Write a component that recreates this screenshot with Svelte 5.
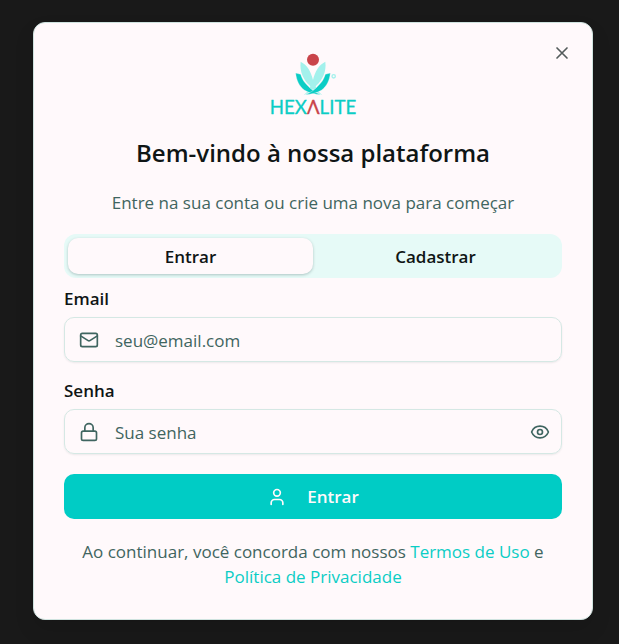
<script>
    let tab = $state("entrar");
    let email = $state("");
    let password = $state("");
    let showPassword = $state(false);

    const tabs = [
        { id: "entrar", label: "Entrar" },
        { id: "cadastrar", label: "Cadastrar" },
    ];

    function handleSubmit(e) {
        e.preventDefault();
    }
</script>

<main class="overlay">
    <div class="dialog" role="dialog" aria-modal="true" aria-labelledby="title">
        <button class="close" type="button" aria-label="Fechar">
            <svg width="20" height="20" viewBox="0 0 24 24">
                <path d="M18 6 6 18M6 6l12 12" />
            </svg>
        </button>

        <svg class="logo" width="94" height="68" viewBox="18 22 282 204" role="img" aria-label="Hexalite">
            <g class="petals">
                <path d="M122 48C142 58 153 78 159 103C164 120 172 136 187 149C170 142 158 132 148 119C131 102 118 78 122 48Z" />
                <path d="M196 48C176 58 165 78 159 103C154 120 146 136 131 149C148 142 160 132 170 119C187 102 200 78 196 48Z" />
            </g>
            <g class="wings">
                <path d="M107 82L122 86C127 103 135 112 145 122C154 132 164 140 182 147C164 146 148 142 134 134C117 121 109 104 107 82Z" />
                <path d="M211 82L196 86C191 103 183 112 173 122C164 132 154 140 136 147C154 146 170 142 184 134C201 121 209 104 211 82Z" />
            </g>
            <circle cx="159" cy="42" r="18" fill="#c9444a" />
            <circle class="mark" cx="221" cy="92" r="5" />
            <text class="wordmark" x="159" y="204" text-anchor="middle">HEX<tspan class="lambda">Λ</tspan>LITE</text>
        </svg>

        <h1 id="title">Bem-vindo à nossa plataforma</h1>
        <p class="subtitle">Entre na sua conta ou crie uma nova para começar</p>

        <div class="tabs" role="tablist">
            {#each tabs as t}
                <button
                    type="button"
                    role="tab"
                    aria-selected={tab === t.id}
                    class:active={tab === t.id}
                    onclick={() => (tab = t.id)}
                >
                    {t.label}
                </button>
            {/each}
        </div>

        <form onsubmit={handleSubmit}>
            <label for="email">Email</label>
            <div class="field">
                <svg width="20" height="20" viewBox="0 0 24 24">
                    <rect x="2" y="4" width="20" height="16" rx="2" />
                    <path d="m22 7-8.970 5.700a1.940 1.940 0 0 1-2.060 0L2 7" />
                </svg>
                <input id="email" type="email" placeholder="seu@email.com" bind:value={email} />
            </div>

            <label for="password">Senha</label>
            <div class="field">
                <svg width="20" height="20" viewBox="0 0 24 24">
                    <rect x="3" y="11" width="18" height="11" rx="2" />
                    <path d="M7 11V7a5 5 0 0 1 10 0v4" />
                </svg>
                <input
                    id="password"
                    type={showPassword ? "text" : "password"}
                    placeholder="Sua senha"
                    bind:value={password}
                />
                <button
                    class="toggle"
                    type="button"
                    aria-label="Mostrar senha"
                    onclick={() => (showPassword = !showPassword)}
                >
                    <svg width="20" height="20" viewBox="0 0 24 24">
                        <path d="M2.062 12.348a1 1 0 0 1 0-.696 10.750 10.750 0 0 1 19.876 0 1 1 0 0 1 0 .696 10.750 10.750 0 0 1-19.876 0" />
                        <circle cx="12" cy="12" r="3" />
                    </svg>
                </button>
            </div>

            <button class="submit" type="submit">
                <svg width="20" height="20" viewBox="0 0 24 24">
                    <path d="M19 21v-2a4 4 0 0 0-4-4H9a4 4 0 0 0-4 4v2" />
                    <circle cx="12" cy="7" r="4" />
                </svg>
                Entrar
            </button>
        </form>

        <p class="terms">
            Ao continuar, você concorda com nossos <a href="#termos">Termos de Uso</a> e
            <a href="#privacidade">Política de Privacidade</a>
        </p>
    </div>
</main>

<style>
    :global(body) {
        background: #191919;
    }

    .overlay {
        box-sizing: border-box;
        min-height: 100vh;
        padding: 22px 26px 24px 33px;
        font-family: "Segoe UI", "Open Sans", "Noto Sans", sans-serif;
        font-size: 17px;
        line-height: 25px;
        color: #0f1515;
    }

    .dialog {
        position: relative;
        box-sizing: border-box;
        max-width: 640px;
        margin: 0 auto;
        padding: 30px;
        background: #fff9fb;
        border: 1px solid #cfe3df;
        border-radius: 12px;
        box-shadow: 0 10px 20px rgba(0, 0, 0, 0.1);
    }

    svg {
        flex: none;
        fill: none;
        stroke: currentColor;
        stroke-width: 2;
        stroke-linecap: round;
        stroke-linejoin: round;
    }

    button {
        padding: 0;
        border: 0;
        background: none;
        font: inherit;
        color: inherit;
        cursor: pointer;
    }

    .close {
        position: absolute;
        top: 20px;
        right: 20px;
        display: flex;
        color: #545b5b;
    }

    .logo {
        display: block;
        margin: 0 auto;
        stroke: none;
    }

    .wings {
        fill: #0bcdc5;
        stroke: #fff9fb;
        stroke-width: 1;
    }

    .petals {
        fill: #a3f1ec;
    }

    .mark {
        stroke: #a3f1ec;
        stroke-width: 4;
    }

    .wordmark {
        font-family: Lato, "Open Sans", sans-serif;
        font-size: 56px;
        fill: #0bcdc5;
        stroke: #0bcdc5;
        stroke-width: 1;
    }

    .lambda {
        fill: #c9444a;
        stroke: #c9444a;
    }

    h1 {
        margin: 14px 0 0;
        font-size: 24px;
        font-weight: 600;
        line-height: 36px;
        text-align: center;
    }

    .subtitle {
        margin: 19px 0;
        color: #3f6560;
        text-align: center;
    }

    .tabs {
        display: grid;
        grid-template-columns: 1fr 1fr;
        padding: 4px;
        background: #e6faf7;
        border-radius: 12px;
    }

    .tabs button {
        height: 36px;
        border-radius: 10px;
        font-weight: 600;
    }

    .tabs .active {
        background: #fff9fb;
        box-shadow: 0 1px 3px rgba(0, 40, 40, 0.25);
    }

    label {
        display: block;
        margin: 8px 0 6px;
        font-weight: 600;
    }

    .field {
        display: flex;
        align-items: center;
        gap: 16px;
        box-sizing: border-box;
        height: 45px;
        margin-bottom: 16px;
        padding: 0 11px 0 14px;
        border: 1px solid #d5e8e4;
        border-radius: 10px;
        box-shadow: 0 1px 2px rgba(0, 40, 40, 0.08);
        color: #3f6560;
    }

    input {
        flex: 1;
        min-width: 0;
        padding: 2px 0 0;
        border: 0;
        outline: 0;
        background: none;
        font: inherit;
        color: #0f1515;
    }

    input::placeholder {
        color: #3f6560;
        opacity: 1;
    }

    .toggle {
        display: flex;
    }

    .submit {
        display: flex;
        align-items: center;
        justify-content: center;
        gap: 20px;
        width: 100%;
        height: 45px;
        margin-top: 20px;
        border-radius: 10px;
        background: #00ccc5;
        color: #fff9fb;
        font-weight: 600;
    }

    .terms {
        margin: 20px 0 0;
        color: #3f6560;
        text-align: center;
    }

    a {
        color: #0bcdc5;
        text-decoration: none;
    }
</style>
